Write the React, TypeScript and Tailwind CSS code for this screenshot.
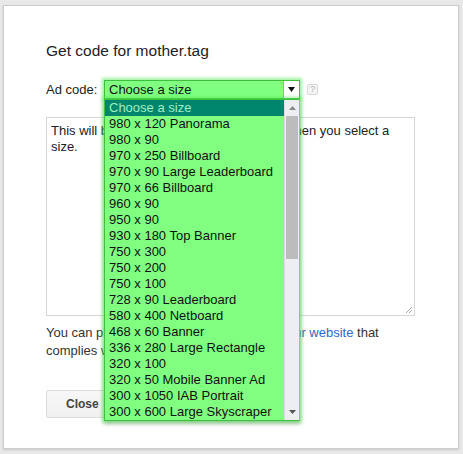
import React from "react";

const items = [
  "980 x 120 Panorama",
  "980 x 90",
  "970 x 250 Billboard",
  "970 x 90 Large Leaderboard",
  "970 x 66 Billboard",
  "960 x 90",
  "950 x 90",
  "930 x 180 Top Banner",
  "750 x 300",
  "750 x 200",
  "750 x 100",
  "728 x 90 Leaderboard",
  "580 x 400 Netboard",
  "468 x 60 Banner",
  "336 x 280 Large Rectangle",
  "320 x 100",
  "320 x 50 Mobile Banner Ad",
  "300 x 1050 IAB Portrait",
  "300 x 600 Large Skyscraper",
];

export default function App() {
  return (
    <div
      className="w-[463px] h-[454px] bg-[#e8e8e8] pt-[5px] pl-[3px] pr-[4px] pb-[5px]"
      style={{ fontFamily: '"Liberation Sans", Arial, sans-serif' }}
    >
      <div className="h-full bg-white border border-[#cdcdcd] shadow-[0_1px_2px_rgba(0,0,0,0.15)] pl-[42px] pt-[36px]">
        <div className="text-[15.5px] leading-[18px] text-[#222]">Get code for mother.tag</div>

        <div className="mt-[20px] flex items-center text-[13px] text-[#222]">
          <span className="w-[58px]">Ad code:</span>
          <div className="relative z-10">
            <div className="flex w-[196px] h-[19px] border border-[#3fbf3f] shadow-[0_0_3px_2px_rgba(80,230,80,0.55)]">
              <div className="flex-1 bg-[#80ff80] pl-[4px] leading-[17px] text-[13px] text-[#111]">
                Choose a size
              </div>
              <div className="w-[16px] bg-white border-l border-[#9ab] flex items-center justify-center">
                <svg width="7" height="5" viewBox="0 0 7 5">
                  <path d="M0 0h7L3.5 5z" fill="#111" />
                </svg>
              </div>
            </div>
            <div className="absolute left-0 top-[19px] w-[196px] flex border border-[#3fbf3f] border-r-[#a9b0b8] shadow-[0_0_3px_2px_rgba(80,230,80,0.55),0_3px_4px_rgba(0,0,0,0.25)]">
              <div className="w-[179px] bg-[#80ff80] text-[13px] leading-[16px] text-[#111]">
                <div className="bg-[#00866c] text-[#9ef0c4] pl-[4px] h-[16px]">Choose a size</div>
                {items.map((t) => (
                  <div key={t} className="pl-[4px] h-[16px] whitespace-nowrap">
                    {t}
                  </div>
                ))}
              </div>
              <div className="w-[15px] bg-[#eceef1] border-l border-[#d8dbdf] flex flex-col">
                <div className="h-[16px] flex items-center justify-center">
                  <svg width="7" height="4" viewBox="0 0 7 4">
                    <path d="M0 4L3.5 0L7 4z" fill="#888" />
                  </svg>
                </div>
                <div className="mx-[1px] h-[143px] bg-[#bcbcbc]" />
                <div className="flex-1" />
                <div className="h-[16px] flex items-center justify-center">
                  <svg width="7" height="4" viewBox="0 0 7 4">
                    <path d="M0 0h7L3.5 4z" fill="#555" />
                  </svg>
                </div>
              </div>
            </div>
          </div>
          <div className="ml-[7px] w-[11px] h-[11px] rounded-[2px] border border-[#d8d8d8] bg-[#f5f5f5] flex items-center justify-center text-[9px] leading-none text-[#b0b0b0]">
            ?
          </div>
        </div>

        <div className="mt-[17px] w-[369px] h-[199px] border border-[#d6d6d6] px-[4px] pt-[5px] text-[13px] leading-[16px] text-[#222] relative">
          This will be populated with your ad code when you select a
          <br />
          size.
          <svg className="absolute right-[1px] bottom-[1px]" width="9" height="9" viewBox="0 0 9 9">
            <path d="M8 2L2 8M8 5L5 8" stroke="#aaa" strokeWidth="1" />
          </svg>
        </div>

        <div className="mt-[8px] text-[13px] leading-[18px] text-[#333]">
          You can place this ad code on a page of <span className="text-[#3366cc]">your website</span> that
          <br />
          complies with our policies.
        </div>

        <div className="mt-[30px]">
          <div className="inline-flex items-center h-[28px] px-[19px] border border-[#dcdcdc] rounded-[2px] bg-gradient-to-b from-[#f7f7f7] to-[#f0f0f0] text-[12px] font-bold text-[#444]">
            Close
          </div>
        </div>
      </div>
    </div>
  );
}
